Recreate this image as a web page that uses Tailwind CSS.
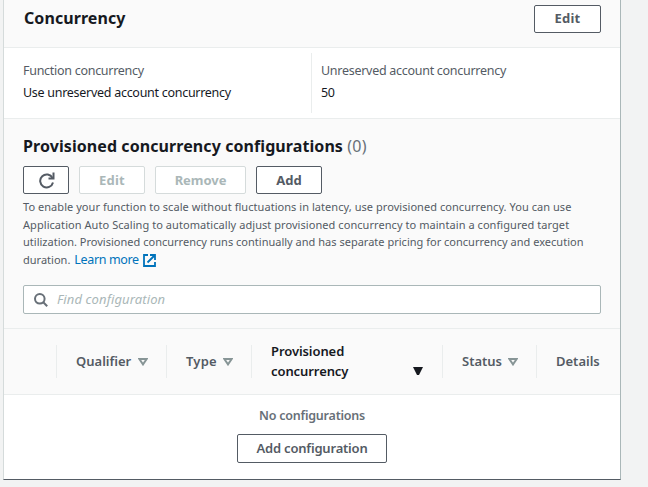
<!DOCTYPE html>
<html lang="en">
<head>
<meta charset="utf-8">
<title>Concurrency</title>
<script src="https://cdn.jsdelivr.net/npm/@tailwindcss/browser@4"></script>
</head>
<body class="h-[487px] w-[648px] overflow-hidden bg-[#f2f3f3] font-['Noto_Sans','Open_Sans',sans-serif] text-[13px] leading-[20px] text-[#545b64]">
<main class="ml-[3px] flex h-[480px] w-[618px] flex-col border-x border-b border-l-[#d5dbdb] border-r-[#aab7b8] border-b-[#545b64] bg-white whitespace-nowrap">
  <header class="flex h-[48px] shrink-0 justify-between border-b border-[#eaeded] bg-[#fafafa] pt-[5px] pr-[19px] pl-[20px]">
    <h2 class="pt-[2px] text-[16px] leading-[22px] font-bold tracking-[0.07px] text-[#16191f]">Concurrency</h2>
    <button class="flex h-[28px] w-[67px] items-center justify-center rounded-[2px] border border-[#545b64] bg-white pb-[2px] font-bold tracking-[0.2px]">Edit</button>
  </header>
  <section class="flex h-[71px] shrink-0 border-b border-[#eaeded] pt-[5px] pb-[5px] text-[12.5px] leading-[22px] tracking-[-0.28px]">
    <div class="w-[308px] border-r border-[#eaeded] pt-[7px] pl-[19px]">
      <div>Function concurrency</div>
      <div class="text-[#16191f]">Use unreserved account concurrency</div>
    </div>
    <div class="pt-[7px] pl-[9px]">
      <div>Unreserved account concurrency</div>
      <div class="text-[#16191f]">50</div>
    </div>
  </section>
  <section class="h-[209px] shrink-0 bg-[#fafafa] px-[19px] pt-[16px]">
    <h2 class="h-[31px] text-[16px] leading-[22px] font-bold tracking-[0.08px] text-[#16191f]">Provisioned concurrency configurations <span class="font-normal tracking-[0.3px] text-[#687078]">(0)</span></h2>
    <div class="flex gap-[10px]">
      <button class="flex h-[28px] w-[46px] items-center justify-center rounded-[2px] border border-[#545b64] bg-white">
        <svg class="ml-[1px] h-[17px] w-[16px]" viewBox="0 0 16 17" fill="none" stroke="#545b64" stroke-width="2"><path d="M14 10.5A6.5 6.5 0 1 1 13.5 6"/><path d="M14.5 0.5V6.5H9.5"/></svg>
      </button>
      <button class="h-[28px] w-[66px] rounded-[2px] border border-[#d5dbdb] bg-white font-bold tracking-[0.2px] text-[#aab7b8]">Edit</button>
      <button class="h-[28px] w-[91px] rounded-[2px] border border-[#d5dbdb] bg-white font-bold tracking-[-0.05px] text-[#aab7b8]">Remove</button>
      <button class="h-[28px] w-[66px] rounded-[2px] border border-[#545b64] bg-white font-bold tracking-[0.1px]">Add</button>
    </div>
    <div class="mt-[4px] text-[11px] leading-[17.6px] tracking-[0.01px]">
      <div class="tracking-[0.05px]">To enable your function to scale without fluctuations in latency, use provisioned concurrency. You can use</div>
      <div class="tracking-[0.06px]">Application Auto Scaling to automatically adjust provisioned concurrency to maintain a configured target</div>
      <div>utilization. Provisioned concurrency runs continually and has separate pricing for concurrency and execution</div>
      <div class="flex items-center">duration.<a class="ml-[4px] flex items-center gap-[4px] text-[12.5px] tracking-[-0.35px] text-[#0073bb]">Learn more
        <svg class="mt-[2px] h-[13px] w-[13px]" viewBox="0 0 13 13" fill="none" stroke="#0073bb" stroke-width="1.8"><path d="M5 1H1V12H12V8"/><path d="M7 1H12V6M12 1L4.5 8.5"/></svg></a></div>
    </div>
    <div class="mt-[17px] flex h-[29px] items-center gap-[9px] rounded-[2px] border border-[#aab7b8] bg-white pl-[10px]">
      <svg class="size-[14px]" viewBox="0 0 14 14" fill="none" stroke="#687078" stroke-width="2"><circle cx="5.8" cy="5.8" r="4.8"/><path d="M9.3 9.3L13.2 13.2"/></svg>
      <span class="pb-[2px] tracking-[0.12px] text-[#aab7b8] italic">Find configuration</span>
    </div>
  </section>
  <div class="flex h-[67px] shrink-0 items-center border-y border-[#eaeded] bg-[#fafafa] font-semibold">
    <div class="h-[33px] w-[53px] border-r border-[#eaeded]"></div>
    <div class="flex h-[33px] w-[110px] items-center gap-[7px] border-r border-[#eaeded] pl-[19px]"><span class="pb-[2px]">Qualifier</span><svg class="h-[8px] w-[10px]" viewBox="0 0 10 8" fill="none" stroke="#879596" stroke-width="2"><path d="M1.3 1H8.7L5 6.4Z"/></svg></div>
    <div class="flex h-[33px] w-[85px] items-center gap-[6px] border-r border-[#eaeded] pl-[19px]"><span class="pb-[2px] tracking-[0.2px]">Type</span><svg class="h-[8px] w-[10px]" viewBox="0 0 10 8" fill="none" stroke="#879596" stroke-width="2"><path d="M1.3 1H8.7L5 6.4Z"/></svg></div>
    <div class="flex h-[33px] w-[191px] items-center justify-between border-r border-[#eaeded] pr-[19px] pl-[19px] text-[#16191f]"><div class="pb-[2px] tracking-[-0.08px]">Provisioned<br>concurrency</div><svg class="mt-[19px] h-[8px] w-[10px]" viewBox="0 0 10 8" fill="#16191f"><path d="M0 0H10L6 8H4Z"/></svg></div>
    <div class="flex h-[33px] w-[94px] items-center gap-[6px] border-r border-[#eaeded] pl-[19px]"><span class="pb-[2px]">Status</span><svg class="h-[8px] w-[10px]" viewBox="0 0 10 8" fill="none" stroke="#879596" stroke-width="2"><path d="M1.3 1H8.7L5 6.4Z"/></svg></div>
    <div class="pb-[2px] pl-[19px]">Details</div>
  </div>
  <div class="flex flex-col items-center pt-[11px]">
    <div class="text-[12.5px] font-semibold tracking-[-0.22px] text-[#687078]">No configurations</div>
    <button class="mt-[8px] h-[29px] w-[150px] rounded-[2px] border border-[#545b64] bg-white pb-[2px] font-semibold tracking-[-0.2px]">Add configuration</button>
  </div>
</main>
</body>
</html>
